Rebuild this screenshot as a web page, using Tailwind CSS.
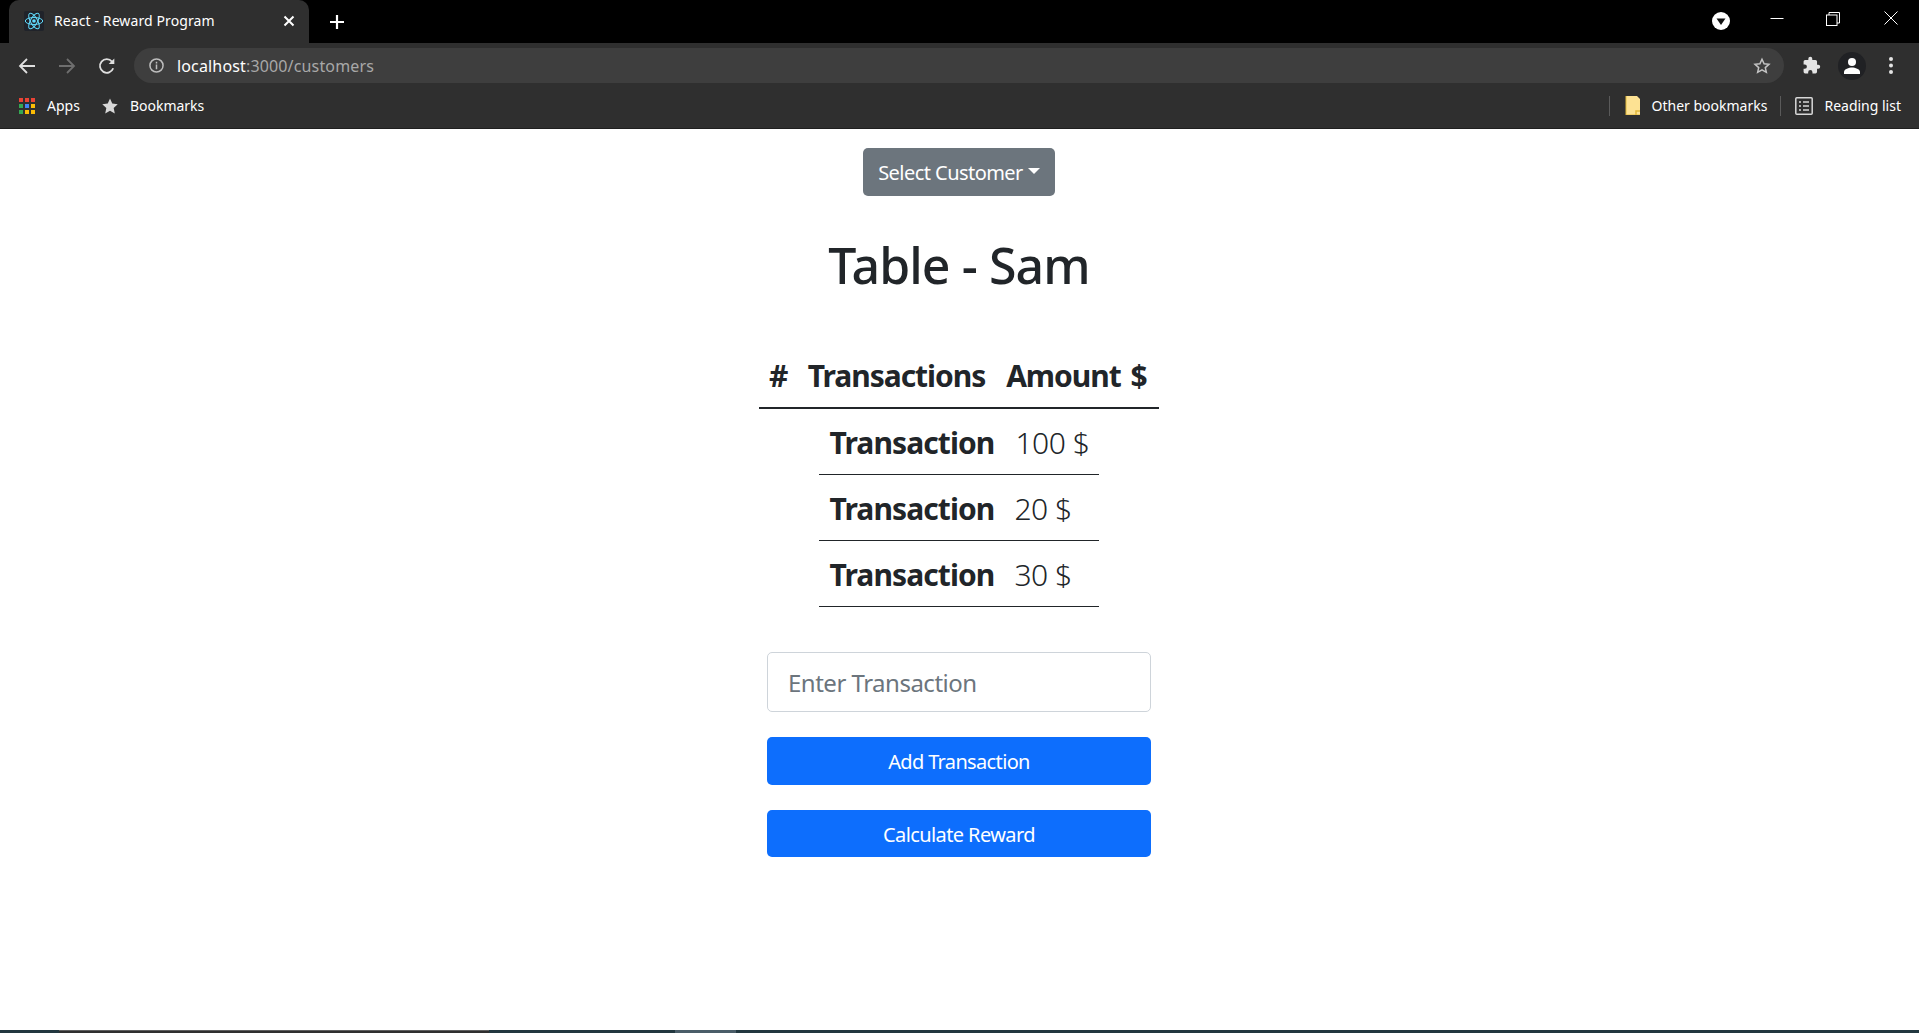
<!DOCTYPE html>
<html lang="en">
<head>
  <meta charset="UTF-8" />
  <title>React - Reward Program</title>
  <script src="https://cdn.jsdelivr.net/npm/@tailwindcss/browser@4"></script>
</head>
<body class="h-screen overflow-hidden bg-white font-['Noto_Sans',sans-serif] text-[#212529] flex flex-col">

  <!-- tab strip -->
  <div class="h-[43px] shrink-0 bg-black flex items-start relative">
    <div class="ml-[9px] mt-0 w-[300px] h-[43px] bg-[#2f2f2f] rounded-t-[10px] flex items-center pl-[15px] pr-[12px] pb-[2px]">
      <svg class="w-5 h-5 shrink-0" viewBox="0 0 24 24" fill="none" stroke="#61dafb" stroke-width="1.2">
        <rect x="0" y="0" width="24" height="24" rx="2" fill="#20232a" stroke="none"/>
        <circle cx="12" cy="12" r="2.2" fill="#61dafb" stroke="none"/>
        <ellipse cx="12" cy="12" rx="10.5" ry="4.2"/>
        <ellipse cx="12" cy="12" rx="10.5" ry="4.2" transform="rotate(60 12 12)"/>
        <ellipse cx="12" cy="12" rx="10.5" ry="4.2" transform="rotate(120 12 12)"/>
      </svg>
      <span class="ml-[10px] text-[14px] text-white tracking-[0.1px] whitespace-nowrap">React - Reward Program</span>
      <svg class="ml-auto mr-[2px] w-3 h-3" viewBox="0 0 12 12" stroke="#fff" stroke-width="2"><path d="M1.5 1.5l9 9M10.5 1.5l-9 9"/></svg>
    </div>
    <svg class="ml-[20px] mt-[14px] w-4 h-4" viewBox="0 0 16 16" stroke="#fff" stroke-width="2.2"><path d="M8 1v14M1 8h14"/></svg>
    <div class="ml-auto flex items-start">
      <svg class="mt-[12px] w-[18px] h-[18px]" viewBox="0 0 18 18"><circle cx="9" cy="9" r="9" fill="#fff"/><path d="M4.5 6.5h9L9 13z" fill="#111"/></svg>
      <svg class="ml-[40px] mt-[12px] w-[14px] h-[14px]" viewBox="0 0 14 14" stroke="#fff" stroke-width="1"><path d="M0.5 6.5h13"/></svg>
      <svg class="ml-[42px] mt-[12px] w-[14px] h-[14px]" viewBox="0 0 14 14" fill="none" stroke="#fff" stroke-width="1"><rect x="0.5" y="3" width="10.5" height="10.5"/><path d="M3 3V0.5h10.5V11H11"/></svg>
      <svg class="ml-[44px] mr-[21px] mt-[11px] w-[14px] h-[14px]" viewBox="0 0 14 14" stroke="#fff" stroke-width="1"><path d="M0.5 0.5l13 13M13.5 0.5l-13 13"/></svg>
    </div>
  </div>

  <!-- toolbar -->
  <div class="h-[40px] shrink-0 bg-[#2f2f2f] flex items-center pt-[5px] pl-[18px]">
    <svg class="w-[18px] h-[18px]" viewBox="0 0 18 18" fill="none" stroke="#dedede" stroke-width="1.8"><path d="M17 9H2M9 2L2 9l7 7"/></svg>
    <svg class="ml-[22px] w-[18px] h-[18px]" viewBox="0 0 18 18" fill="none" stroke="#6e6e6e" stroke-width="1.8"><path d="M1 9h15M9 2l7 7-7 7"/></svg>
    <svg class="ml-[22px] w-[18px] h-[18px]" viewBox="0 0 18 18" fill="none" stroke="#dedede" stroke-width="1.8"><path d="M15.2 11.2A6.8 6.8 0 1 1 14 4.6"/><path d="M16.3 1.5v5.6h-5.6z" fill="#dedede" stroke="none"/></svg>
    <div class="ml-[18px] w-[1650px] h-[35px] rounded-full bg-[#3e3e3e] flex items-center pl-[15px] pr-[13px]">
      <svg class="w-[15px] h-[15px]" viewBox="0 0 16 16" fill="none" stroke="#bdbdbd" stroke-width="1.6"><circle cx="8" cy="8" r="7"/><path d="M8 7v5M8 4v1.8"/></svg>
      <span class="ml-[13px] text-[16px] tracking-[0.15px] text-white whitespace-nowrap">localhost<span class="text-[#a8a8a8]">:3000/customers</span></span>
      <svg class="ml-auto w-[18px] h-[18px]" viewBox="0 0 24 24" fill="none" stroke="#c4c4c4" stroke-width="2"><path d="M12 3l2.8 6 6.5.7-4.9 4.4 1.4 6.4L12 17.2 6.200 20.500l1.400-6.400L2.700 9.700 9.200 9z"/></svg>
    </div>
    <svg class="ml-[18px] w-[19px] h-[19px]" viewBox="0 0 24 24" fill="#e4e4e4"><path d="M20.500 11H19V7a2 2 0 0 0-2-2h-4V3.500a2.500 2.500 0 0 0-5 0V5H4a2 2 0 0 0-2 2v3.800h1.500a2.700 2.700 0 0 1 0 5.400H2V20a2 2 0 0 0 2 2h3.800v-1.500a2.700 2.700 0 0 1 5.400 0V22H17a2 2 0 0 0 2-2v-4h1.500a2.500 2.500 0 0 0 0-5z"/></svg>
    <div class="ml-[17px] w-7 h-7 rounded-full bg-[#202124] flex items-center justify-center">
      <svg class="w-[18px] h-[18px]" viewBox="0 0 18 18" fill="#fff"><circle cx="9" cy="5" r="4"/><path d="M1 17v-2c0-3 5-4.500 8-4.500s8 1.500 8 4.500v2z"/></svg>
    </div>
    <svg class="ml-[23px] w-[4px] h-[17px]" viewBox="0 0 4 17" fill="#e4e4e4"><circle cx="2" cy="2" r="2"/><circle cx="2" cy="8.500" r="2"/><circle cx="2" cy="15" r="2"/></svg>
  </div>

  <!-- bookmarks bar -->
  <div class="h-[46px] shrink-0 bg-[#2f2f2f] border-b border-[#1f1f1f] flex items-center pl-[19px] pr-[18px] text-[14px] text-white whitespace-nowrap">
    <svg class="w-4 h-4" viewBox="0 0 16 16">
      <rect width="4" height="4" fill="#ea4335"/><rect x="6" width="4" height="4" fill="#ea4335"/><rect x="12" width="4" height="4" fill="#ea4335"/>
      <rect y="6" width="4" height="4" fill="#34a853"/><rect x="6" y="6" width="4" height="4" fill="#4285f4"/><rect x="12" y="6" width="4" height="4" fill="#fbbc05"/>
      <rect y="12" width="4" height="4" fill="#34a853"/><rect x="6" y="12" width="4" height="4" fill="#fbbc05"/><rect x="12" y="12" width="4" height="4" fill="#fbbc05"/>
    </svg>
    <span class="ml-[12px]">Apps</span>
    <svg class="ml-[21px] w-[18px] h-[18px]" viewBox="0 0 24 24" fill="#d8d8d8"><path d="M12 2l3 6.800 7.300.8-5.400 5 1.500 7.300-6.400-3.700-6.400 3.700 1.500-7.300-5.400-5L9 8.800z"/></svg>
    <span class="ml-[11px]">Bookmarks</span>
    <div class="ml-auto w-px h-[20px] bg-[#5a5a5a]"></div>
    <svg class="ml-[15px] w-[16px] h-[19px]" viewBox="0 0 16 19"><path d="M1 0h11v0l3 3v16H1z" fill="#fde293"/><path d="M11 19v-4h4" fill="none" stroke="#e2b93b" stroke-width="1.500"/><path d="M1 0v19h14" fill="none" stroke="#e2b93b" stroke-width="1"/></svg>
    <span class="ml-[11px]">Other bookmarks</span>
    <div class="ml-[13px] w-px h-[20px] bg-[#5a5a5a]"></div>
    <svg class="ml-[14px] w-[18px] h-[18px]" viewBox="0 0 18 18" fill="none" stroke="#d8d8d8" stroke-width="1.500"><rect x="0.800" y="0.800" width="16.400" height="16.400" rx="1"/><path d="M4 5h2M8 5h6M4 9h2M8 9h6M4 13h2M8 13h6"/></svg>
    <span class="ml-[11px]">Reading list</span>
  </div>

  <!-- page -->
  <main class="flex-1 flex flex-col items-center pt-[19px] pr-px">
    <button class="w-[192px] h-[48px] pt-px bg-[#6c757d] rounded-[5px] text-white text-[20px] tracking-[-0.55px] flex items-center justify-center">
      Select Customer
      <span class="ml-[5px] mb-[4px] w-0 h-0 border-x-[6px] border-x-transparent border-t-[6px] border-t-white"></span>
    </button>

    <h1 class="mt-[33px] text-[50px] leading-[72px] tracking-[-0.9px] font-medium">Table - Sam</h1>

    <div class="mt-[41px] w-[400px] h-[67px] border-b-2 border-[#212529] flex items-center pt-[1px] text-[30px] font-bold tracking-[-1.05px] whitespace-nowrap">
      <span class="px-[10px]">#</span>
      <span class="px-[10.5px]">Transactions</span>
      <span class="px-[10.5px] [word-spacing:3px]">Amount $</span>
    </div>

    <div class="w-[280px] text-[30px] whitespace-nowrap">
      <div class="h-[66px] pt-[2px] border-b border-[#212529] flex items-center px-[10.5px]">
        <span class="font-bold tracking-[-0.9px]">Transaction</span>
        <span class="ml-[21px] font-light tracking-[-0.5px]">100 $</span>
      </div>
      <div class="h-[66px] pt-[2px] border-b border-[#212529] flex items-center px-[10.5px]">
        <span class="font-bold tracking-[-0.9px]">Transaction</span>
        <span class="ml-[20px] font-light tracking-[-0.5px]">20 $</span>
      </div>
      <div class="h-[66px] pt-[2px] border-b border-[#212529] flex items-center px-[10.5px]">
        <span class="font-bold tracking-[-0.9px]">Transaction</span>
        <span class="ml-[20px] font-light tracking-[-0.5px]">30 $</span>
      </div>
    </div>

    <input class="mt-[45px] w-[384px] h-[60px] pt-px border border-[#ced4da] rounded-[5px] px-[20px] text-[24px] tracking-[-0.5px] placeholder:text-[#6c757d]" placeholder="Enter Transaction" />
    <button class="mt-[25px] w-[384px] h-[48px] pt-px bg-[#0d6efd] rounded-[5px] text-white text-[20px] tracking-[-0.65px]">Add Transaction</button>
    <button class="mt-[25px] w-[384px] h-[47px] pt-[2px] bg-[#0d6efd] rounded-[5px] text-white text-[20px] tracking-[-0.6px]">Calculate Reward</button>
  </main>

  <!-- desktop taskbar sliver -->
  <div class="h-[3px] shrink-0 bg-[#22373f] flex">
    <div class="ml-[59px] w-[430px] bg-[#2f2f2f] border-t border-[#5f5f5f]"></div>
    <div class="ml-[186px] w-[61px] bg-[#4a5d68]"></div>
  </div>

</body>
</html>
